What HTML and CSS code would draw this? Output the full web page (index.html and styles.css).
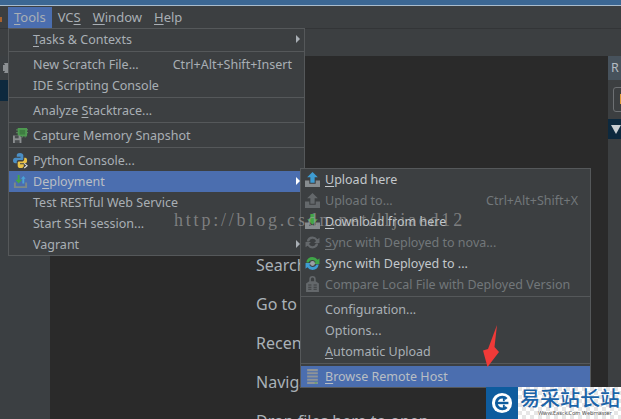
FILE: index.html
```html
<!DOCTYPE html>
<html lang="en">
<head>
<meta charset="utf-8">
<title>Tools menu</title>
<link rel="stylesheet" href="styles.css">
</head>
<body>
<svg class="defs" width="0" height="0" aria-hidden="true">
  <symbol id="tray" viewBox="0 0 14 14"><path d="M0 8h4v3h6V8h4v6H0z"/></symbol>
  <symbol id="up" viewBox="0 0 14 14"><path d="M7 0l5 5H9v5H5V5H2z"/></symbol>
  <symbol id="down" viewBox="0 0 14 14"><path d="M5 0h4v5h3l-5 5-5-5h3z"/></symbol>
  <symbol id="sync" viewBox="0 0 14 14"><path d="M7 1.500a5.500 5.500 0 0 1 4.600 2.500L13.500 2.500V7.500H8.500L10.300 5.500A3.500 3.500 0 0 0 3.800 6H1.600A5.500 5.500 0 0 1 7 1.500z"/><path d="M7 12.500a5.500 5.500 0 0 1-4.600-2.500L.5 11.500V6.500h5L3.700 8.500A3.500 3.500 0 0 0 10.200 8h2.200A5.500 5.500 0 0 1 7 12.500z"/></symbol>
</svg>
<div class="app">
  <div class="titlebar"></div>
  <div class="menubar">
    <i class="frag"></i>
    <span class="top active"><u>T</u>ools</span>
    <span class="top">VC<u>S</u></span>
    <span class="top"><u>W</u>indow</span>
    <span class="top"><u>H</u>elp</span>
  </div>
  <div class="toolbar"></div>
  <div class="main">
    <aside class="sidebar">
      <div class="side-head">
        <svg class="gear" viewBox="0 0 8 12"><path d="M1 1h4l2 2v6l-2 2H1l1-2H0V3h2z"/></svg>
      </div>
      <div class="side-sel"></div>
    </aside>
    <section class="editor">
      <p>Search Everywhere</p>
      <p>Go to File</p>
      <p>Recent Files</p>
      <p>Navigation Bar</p>
      <p>Drop files here to open</p>
    </section>
    <aside class="rightpanel">
      <div class="r-head">R</div>
      <div class="r-tools"><div class="r-btn"><i></i></div></div>
      <div class="r-sel"><i></i></div>
    </aside>
  </div>
</div>

<div class="menu menu-tools">
  <div class="row"><span><u>T</u>asks &amp; Contexts</span><b class="arrow"></b></div>
  <hr>
  <div class="row"><span>New Scratch File...</span><kbd>Ctrl+Alt+Shift+Insert</kbd></div>
  <div class="row"><span>IDE Scripting Console</span></div>
  <hr>
  <div class="row"><span>Analyze <u>S</u>tacktrace...</span></div>
  <hr>
  <div class="row">
    <svg class="ic" viewBox="0 0 16 16"><rect x="5" y="0" width="10" height="9" fill="#4e9a50"/><path d="M5 2H3.500M5 5H3.500M15 2h1M15 5h1M7 9v1M10 9v1M13 9v1" stroke="#6aa86c"/><rect x="7" y="2" width="6" height="5" fill="#3f7d42"/><path d="M0 8h7l2 2v6H0z" fill="#8a8d8f"/><rect x="2" y="8" width="4" height="3" fill="#4a4d4f"/><rect x="2" y="13" width="5" height="3" fill="#4a4d4f"/></svg>
    <span>Capture Memory Snapshot</span>
  </div>
  <hr>
  <div class="row">
    <svg class="ic" viewBox="0 0 16 16"><path d="M7.500 0C4.500 0 4 1.300 4 2.500V4h4v1H2.500C1 5 0 6.200 0 8s1 3 2.500 3H4V9.500C4 8.300 5 7.500 6 7.500h3.500C10.500 7.500 11 6.800 11 6V2.500C11 1 9.500 0 7.500 0z" fill="#4b8ec4"/><path d="M8 16c3 0 3.500-1.300 3.500-2.500V12h-4v-1H13c1.500 0 2-1.200 2-3s-.5-3-2-3h-1v1.500C12 8 11 9 10 9H6.500C5.500 9 5 9.700 5 10.500v3C5 15 6 16 8 16z" fill="#e8c24a"/><path d="M12 11l3 2.500-3 2.500" fill="none" stroke="#ddd" stroke-width="1.200"/></svg>
    <span>Python Console...</span>
  </div>
  <div class="row sel">
    <svg class="ic" viewBox="0 0 16 16"><path d="M1 9h2v4h10V9h2v6H1z" fill="#7d8a86"/><path d="M5 1v5H2.500L6 10l3.500-4H7V1z" fill="#45a546"/><path d="M11 2L8.500 5H10v5h2V5h1.500z" fill="#4aa3d8"/></svg>
    <span>D<u>e</u>ployment</span><b class="arrow bright"></b>
  </div>
  <div class="row"><span>Test RESTful Web Service</span></div>
  <div class="row"><span>Start SSH session...</span></div>
  <div class="row"><span>Vagrant</span><b class="arrow"></b></div>
</div>

<div class="menu menu-deploy">
  <div class="row lit">
    <svg class="ic"><use href="#tray" class="c-tray"/><use href="#up" class="c-blue"/></svg>
    <span><u>U</u>pload here</span>
  </div>
  <div class="row off">
    <svg class="ic"><use href="#tray" class="c-off"/><use href="#up" class="c-off"/></svg>
    <span>Upload to...</span><kbd>Ctrl+Alt+Shift+X</kbd>
  </div>
  <div class="row lit">
    <svg class="ic"><use href="#tray" class="c-tray"/><use href="#down" class="c-green"/></svg>
    <span><u>D</u>ownload from here</span>
  </div>
  <div class="row off">
    <svg class="ic"><use href="#sync" class="c-off"/></svg>
    <span><u>S</u>ync with Deployed to nova...</span>
  </div>
  <div class="row lit">
    <svg class="ic" viewBox="0 0 14 14"><path d="M7 1a6 6 0 0 1 4.800 2.400L13.500 2v5.500H8l2-2A3.800 3.800 0 0 0 3.300 6H1.200A6 6 0 0 1 7 1z" fill="#3fa648"/><path d="M7 13a6 6 0 0 1-4.800-2.400L.5 12V6.500H6l-2 2A3.800 3.800 0 0 0 10.700 8h2.100A6 6 0 0 1 7 13z" fill="#3e9cd2"/><circle cx="7" cy="7" r="2.300" fill="#9aa0a5"/></svg>
    <span>Sync with Deployed to ...</span>
  </div>
  <div class="row off">
    <svg class="ic" viewBox="0 0 14 14"><path d="M1 14V6l3-2V2a3 3 0 0 1 6 0v2l3 2v8zM5.500 4h3V2a1.500 1.500 0 0 0-3 0z" fill="#64686b"/><path d="M3 7h3v1H3zM3 9h3v1H3zM3 11h3v1H3zM8 7h3v1H8zM8 9h3v1H8zM8 11h3v1H8z" fill="#3c3f41"/></svg>
    <span>Compare Local File with Deployed Version</span>
  </div>
  <hr>
  <div class="row"><span>Configuration...</span></div>
  <div class="row"><span>Options...</span></div>
  <div class="row"><span><u>A</u>utomatic Upload</span></div>
  <hr>
  <div class="row sel">
    <svg class="ic" viewBox="0 0 14 14"><path d="M2 0h10v2H2zM2 3h10v2H2zM2 6h10v2H2zM2 9h10v2H2zM2 12h10v2H2z" fill="#8f9498"/><rect x="9" y="12.500" width="2" height="1" fill="#56a85a"/></svg>
    <span><u>B</u>rowse Remote Host</span>
  </div>
</div>

<div class="watermark">http://blog.csdn.net/lljiaed12</div>

<svg class="red-arrow" viewBox="0 0 20 44"><path d="M15 0L12.500 22 17 27 5.500 42 1 25.500 6 24z"/></svg>

<div class="logo">
  <div class="logo-mark">
    <svg viewBox="0 0 24 24"><circle cx="12" cy="12" r="11" fill="#fff"/><path d="M17 7.500A6.500 6.500 0 1 0 17 16.500" fill="none" stroke="#0e5c9e" stroke-width="3"/><path d="M6 12h13" stroke="#0e5c9e" stroke-width="2.600"/><path d="M13 6h2v4h-2zM13 14h2v4h-2z" fill="#0e5c9e"/></svg>
  </div>
  <div class="logo-text">
    <div class="logo-cn">易采站长站</div>
    <div class="logo-en">Www.Easck.Com Webmaster</div>
  </div>
</div>
</body>
</html>
```
FILE: styles.css
```css
* { box-sizing: border-box; }
html, body { margin: 0; padding: 0; }
body {
  width: 621px;
  height: 419px;
  overflow: hidden;
  position: relative;
  background: #3c3f41;
  font-family: "Noto Sans", "Open Sans", sans-serif;
  font-size: 12.5px;
  color: #a9afb5;
}
.defs { position: absolute; }
u { text-underline-offset: 2px; text-decoration-thickness: 1px; }

.app { display: flex; flex-direction: column; width: 621px; height: 419px; }
.titlebar {
  height: 6px;
  background: #3c6793;
  border-bottom: 1px solid #a9bccd;
}
.menubar {
  height: 22px;
  padding: 1px 0 0 0;
  display: flex;
  align-items: stretch;
  background: #3c3f41;
  font-size: 13px;
}
.frag { width: 2px; height: 5px; margin: 10px 6px 0 0; background: #a8622f; }
.top { padding: 0 6px; line-height: 21px; }
.top.active { background: #4b6eaf; }
.toolbar { height: 28px; background: #3c3f41; border-top: 1px solid #333537; }

.main { flex: 1; display: flex; min-height: 0; }
.sidebar { width: 50px; background: #3b3f42; }
.side-head { height: 24px; padding: 6px 0 0 3px; }
.gear { display: block; width: 8px; height: 12px; fill: #8b8f92; }
.side-sel { height: 21px; background: #0d293e; }

.editor {
  flex: 1;
  overflow: hidden;
  background: #2a2a2a;
  padding: 197px 0 0 206px;
  font-size: 16px;
  color: #a9b1b8;
}
.editor p { margin: 0; height: 39px; line-height: 24px; white-space: nowrap; }

.rightpanel { width: 13px; overflow: hidden; background: #3c3f41; }
.r-head { height: 24px; padding-left: 3px; line-height: 24px; background: #47525c; color: #b4bcc3; }
.r-tools { height: 39px; padding: 7px 0 0 5px; }
.r-btn { width: 20px; height: 25px; border: 1px solid #6d7073; border-radius: 3px; padding: 6px 0 0 6px; }
.r-btn i { display: block; width: 3px; height: 10px; background: #e09a3a; }
.r-sel { height: 20px; padding: 6px 0 0 3px; background: #0d293e; }
.r-sel i {
  display: block;
  width: 0;
  height: 0;
  border-left: 5px solid transparent;
  border-right: 5px solid transparent;
  border-top: 9px solid #c9ced2;
}

.menu {
  position: absolute;
  background: #3c3f41;
  border: 1px solid #55585a;
}
.menu-tools { left: 8px; top: 28px; width: 297px; }
.menu-deploy { left: 300px; top: 168px; width: 291px; }
.menu hr { height: 1px; margin: 1px 0 2px; border: 0; background: #55585a; }
.row {
  height: 21px;
  line-height: 21px;
  padding-left: 24px;
  padding-right: 12px;
  display: flex;
  align-items: center;
  position: relative;
  white-space: nowrap;
}
.row kbd { margin-left: auto; font: inherit; }
.row.sel { background: #4b6eaf; color: #b9bec4; }
.row.lit { color: #c3c8cc; }
.row.off { color: #72777a; }
.ic { position: absolute; left: 4px; top: 3px; width: 15px; height: 15px; overflow: visible; }
.arrow {
  position: absolute;
  right: 4px;
  top: 6px;
  width: 0;
  height: 0;
  border-top: 4px solid transparent;
  border-bottom: 4px solid transparent;
  border-left: 4px solid #a9afb5;
}
.arrow.bright { border-left-color: #fff; }
.c-tray { fill: #878c8f; }
.c-off { fill: #64686b; }
.c-blue { fill: #3e9cd2; }
.c-green { fill: #45a546; }

.watermark {
  position: absolute;
  left: 174px;
  top: 209px;
  font-family: "Liberation Serif", serif;
  font-size: 18px;
  line-height: 22px;
  letter-spacing: 2.8px;
  white-space: nowrap;
  color: rgba(170, 170, 170, 0.6);
}
.red-arrow { position: absolute; left: 482px; top: 325px; width: 20px; height: 44px; fill: #f03a38; }

.logo {
  position: absolute;
  left: 486px;
  top: 387px;
  width: 135px;
  height: 32px;
  display: flex;
  background: repeating-conic-gradient(#fff 0 25%, #e6e6e6 0 50%) 0 0 / 8px 8px;
}
.logo-mark { width: 32px; padding: 5px; background: #0e5c9e; }
.logo-mark svg { display: block; width: 22px; height: 22px; }
.logo-text { flex: 1; min-width: 0; padding-left: 2px; }
.logo-cn {
  font-family: "Noto Sans CJK SC", sans-serif;
  font-weight: 500;
  font-size: 20px;
  line-height: 22px;
  color: #1a63a8;
  white-space: nowrap;
}
.logo-en {
  font-size: 5.5px;
  line-height: 8px;
  padding-left: 18px;
  color: #555;
  white-space: nowrap;
}
```
